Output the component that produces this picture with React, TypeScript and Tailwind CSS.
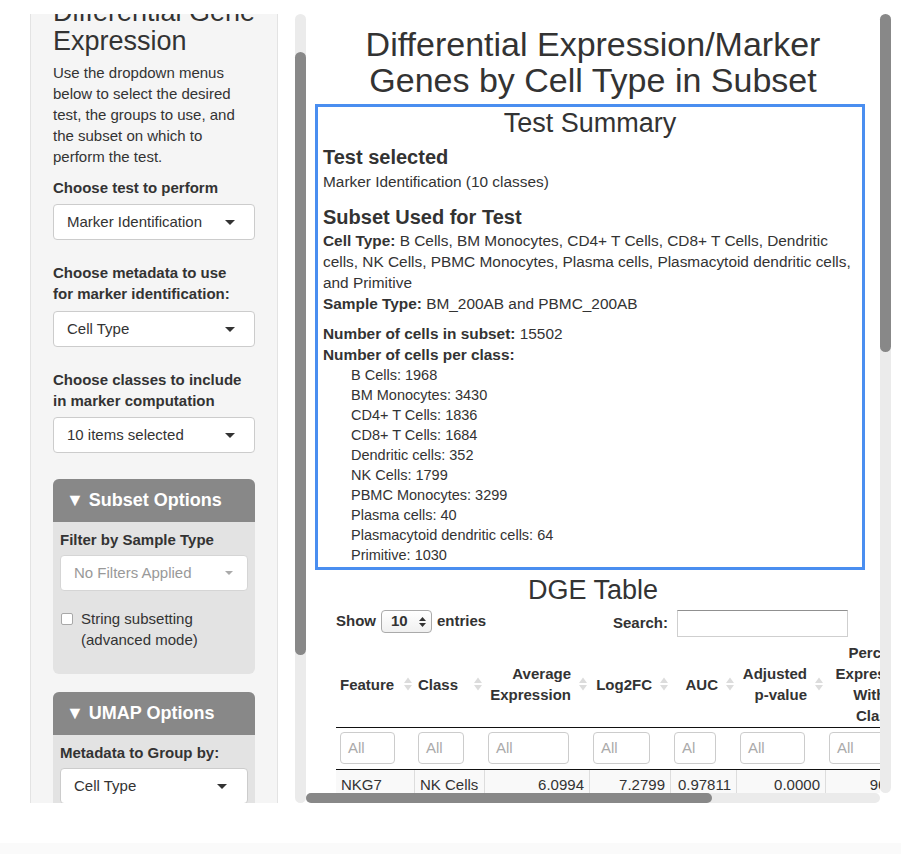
import React from "react";

type Col = {
  w: string;
  inputW: string;
  label: string[];
  right?: boolean;
  center?: boolean;
  value: string;
  ph?: string;
  valuePr?: string;
};

const cols: Col[] = [
  { w: "w-[78px]", inputW: "w-[55px]", label: ["Feature"], value: "NKG7" },
  { w: "w-[70px]", inputW: "w-[46px]", label: ["Class"], value: "NK Cells" },
  { w: "w-[105px]", inputW: "w-[81px]", label: ["Average", "Expression"], right: true, value: "6.0994" },
  { w: "w-[81px]", inputW: "w-[57px]", label: ["Log2FC"], right: true, value: "7.2799" },
  { w: "w-[66px]", inputW: "w-[42px]", label: ["AUC"], right: true, value: "0.97811", ph: "Al" },
  { w: "w-[89px]", inputW: "w-[65px]", label: ["Adjusted", "p-value"], right: true, value: "0.0000" },
  {
    w: "w-[116px]",
    inputW: "w-[80px]",
    label: ["Percent", "Expressing", "Within", "Class"],
    right: true,
    center: true,
    value: "96.5102",
    valuePr: "pr-[17px]",
  },
];

const classCounts = [
  "B Cells: 1968",
  "BM Monocytes: 3430",
  "CD4+ T Cells: 1836",
  "CD8+ T Cells: 1684",
  "Dendritic cells: 352",
  "NK Cells: 1799",
  "PBMC Monocytes: 3299",
  "Plasma cells: 40",
  "Plasmacytoid dendritic cells: 64",
  "Primitive: 1030",
];

function Caret({ light }: { light?: boolean }) {
  return light ? (
    <svg width="8" height="4" viewBox="0 0 8 4" className="shrink-0">
      <path d="M0 0h8L4 4z" fill="#aaa" />
    </svg>
  ) : (
    <svg width="10" height="5" viewBox="0 0 10 5" className="shrink-0">
      <path d="M0 0h10L5 5z" fill="#333" />
    </svg>
  );
}

function Select({ value, disabled }: { value: string; disabled?: boolean }) {
  return (
    <div
      className={
        disabled
          ? "flex h-[36px] items-center justify-between rounded-[4px] border border-[#d5d5d5] bg-white pl-[13px] pr-[14px] text-[15px] text-[#999]"
          : "flex h-[36px] items-center justify-between rounded-[4px] border border-[#ccc] bg-white pl-[13px] pr-[19px] text-[15px] text-[#333]"
      }
    >
      <span>{value}</span>
      <Caret light={disabled} />
    </div>
  );
}

function Panel({ title, children }: { title: string; children: React.ReactNode }) {
  return (
    <div className="rounded-[6px] bg-[#e3e3e3]">
      <div className="flex h-[43px] items-center rounded-t-[6px] bg-[#888] pl-[13px] text-[18px] font-bold text-white">
        ▼ {title}
      </div>
      <div className="px-[7px] pt-[7px] pb-[24px]">{children}</div>
    </div>
  );
}

function SortIcon() {
  return (
    <svg width="8" height="15" viewBox="0 0 8 15" className="absolute right-[2px] top-1/2 -translate-y-1/2">
      <path d="M0 6.5L4 1l4 5.5z" fill="#dcdcdc" />
      <path d="M0 8.5L4 14l4-5.5z" fill="#dcdcdc" />
    </svg>
  );
}

function Sidebar() {
  return (
    <aside className="ml-[30px] h-full w-[248px] shrink-0 overflow-hidden border-x border-[#e3e3e3] bg-[#f5f5f5]">
      <div className="-mt-[16px] px-[22px]">
        <h2 className="whitespace-nowrap text-[27px] leading-[29px] font-normal">
          Differential Gene
          <br />
          Expression
        </h2>
        <p className="mt-[6px] whitespace-nowrap text-[15px] leading-[21px]">
          Use the dropdown menus
          <br />
          below to select the desired
          <br />
          test, the groups to use, and
          <br />
          the subset on which to
          <br />
          perform the test.
        </p>

        <div className="mt-[10px] text-[15px] leading-[21px] font-bold">Choose test to perform</div>
        <div className="mt-[6px]">
          <Select value="Marker Identification" />
        </div>

        <div className="mt-[22px] whitespace-nowrap text-[15px] leading-[21px] font-bold">
          Choose metadata to use
          <br />
          for marker identification:
        </div>
        <div className="mt-[7px]">
          <Select value="Cell Type" />
        </div>

        <div className="mt-[22px] whitespace-nowrap text-[15px] leading-[21px] font-bold">
          Choose classes to include
          <br />
          in marker computation
        </div>
        <div className="mt-[6px]">
          <Select value="10 items selected" />
        </div>

        <div className="mt-[26px]">
          <Panel title="Subset Options">
            <div className="text-[15px] leading-[21px] font-bold">Filter by Sample Type</div>
            <div className="mt-[5px]">
              <Select value="No Filters Applied" disabled />
            </div>
            <div className="mt-[17px] flex gap-[8px] pl-[1px]">
              <div className="mt-[5px] h-[12px] w-[12px] shrink-0 rounded-[2px] border border-[#a8a8a8] bg-white" />
              <div className="text-[15px] leading-[21px]">
                String subsetting
                <br />
                (advanced mode)
              </div>
            </div>
          </Panel>
        </div>

        <div className="mt-[18px]">
          <Panel title="UMAP Options">
            <div className="text-[15px] leading-[21px] font-bold">Metadata to Group by:</div>
            <div className="mt-[5px]">
              <div className="flex h-[36px] items-center justify-between rounded-[4px] border border-[#ccc] bg-white pl-[13px] pr-[20px] text-[15px]">
                <span>Cell Type</span>
                <Caret />
              </div>
            </div>
          </Panel>
        </div>
      </div>
    </aside>
  );
}

function TestSummary() {
  return (
    <div className="ml-[9px] mt-[6px] w-[550px] border-[3px] border-[#4a8ef0] px-[5px] pt-[2px] pb-[2px]">
      <h3 className="text-center text-[27px] leading-[29px] font-normal">Test Summary</h3>
      <h4 className="mt-[8px] text-[20px] leading-[22px] font-bold">Test selected</h4>
      <p className="mt-[3px] text-[15.4px] leading-[21px]">Marker Identification (10 classes)</p>
      <h4 className="mt-[14px] text-[20px] leading-[22px] font-bold">Subset Used for Test</h4>
      <p className="mt-[2px] whitespace-nowrap text-[15.4px] leading-[21px]">
        <b>Cell Type:</b> B Cells, BM Monocytes, CD4+ T Cells, CD8+ T Cells, Dendritic
        <br />
        cells, NK Cells, PBMC Monocytes, Plasma cells, Plasmacytoid dendritic cells,
        <br />
        and Primitive
        <br />
        <b>Sample Type:</b> BM_200AB and PBMC_200AB
      </p>
      <p className="mt-[9px] text-[15.4px] leading-[21px]">
        <b>Number of cells in subset:</b> 15502
        <br />
        <b>Number of cells per class:</b>
      </p>
      <ul className="pl-[28px] text-[14.5px] leading-[20px]">
        {classCounts.map((c) => (
          <li key={c}>{c}</li>
        ))}
      </ul>
    </div>
  );
}

function DgeTable() {
  return (
    <div>
      <h3 className="mt-[6px] text-center text-[27px] leading-[29px] font-normal">DGE Table</h3>
      <div className="mt-[5px] pl-[30px]">
        <div className="flex w-[512px] items-start justify-between text-[15px] font-bold">
          <div className="flex h-[23px] items-center gap-[5px]">
            <span>Show</span>
            <div className="flex h-[23px] w-[51px] items-center justify-between rounded-[4px] border border-[#aaa] bg-gradient-to-b from-white to-[#f0f0f0] pl-[9px] pr-[5px]">
              <span>10</span>
              <svg width="7" height="12" viewBox="0 0 7 12">
                <path d="M0 5L3.5 1L7 5z" fill="#333" />
                <path d="M0 7L3.5 11L7 7z" fill="#333" />
              </svg>
            </div>
            <span>entries</span>
          </div>
          <div className="flex items-center gap-[9px]">
            <span>Search:</span>
            <div className="h-[27px] w-[171px] border border-[#cfcfcf] border-t-[#909090] bg-white" />
          </div>
        </div>

        <div className="mt-[4px] w-[615px] text-[15px]">
          <div className="flex h-[87px] border-b border-[#111]">
            {cols.map((c) => (
              <div key={c.label.join()} className={`relative flex h-full shrink-0 items-center ${c.w}`}>
                <div
                  className={
                    c.center
                      ? "w-full pl-[4px] pr-[18px] text-center leading-[21px] font-bold"
                      : c.right
                        ? "w-full pl-[4px] pr-[18px] text-right leading-[21px] font-bold"
                        : "w-full pl-[4px] pr-[18px] text-left leading-[21px] font-bold"
                  }
                >
                  {c.label.map((l) => (
                    <div key={l}>{l}</div>
                  ))}
                </div>
                <SortIcon />
              </div>
            ))}
          </div>
          <div className="flex h-[42px] border-b border-[#111] pt-[4px]">
            {cols.map((c) => (
              <div key={c.label.join()} className={`shrink-0 pl-[4px] ${c.w}`}>
                <div
                  className={`flex h-[32px] items-center rounded-[4px] border border-[#ccc] bg-white pl-[7px] text-[#aaa] ${c.inputW}`}
                >
                  {c.ph ?? "All"}
                </div>
              </div>
            ))}
          </div>
          <div className="flex h-[30px] bg-[#f9f9f9]">
            {cols.map((c, i) => (
              <div
                key={c.label.join()}
                className={`flex shrink-0 items-center ${c.w} ${i > 0 ? "border-l border-[#ddd]" : ""} ${
                  c.right ? `justify-end ${c.valuePr ?? "pr-[5px]"}` : "pl-[5px]"
                }`}
              >
                {c.value}
              </div>
            ))}
          </div>
        </div>
      </div>
    </div>
  );
}

export default function App() {
  return (
    <div className="h-[854px] w-[901px] overflow-hidden bg-white font-['Liberation_Sans',Arial,sans-serif] text-[#333]">
      <div className="mt-[14px] flex h-[789px]">
        <Sidebar />
        <div className="ml-[17px] h-full w-[11px] shrink-0 rounded-full bg-[#ebebeb] pt-[38px]">
          <div className="h-[603px] rounded-full bg-[#888]" />
        </div>
        <main className="flex h-full w-[585px] shrink-0 flex-col">
          <div className="flex min-h-0 flex-1">
            <div className="w-[574px] shrink-0 overflow-hidden">
              <h1 className="pt-[12px] text-center text-[34px] leading-[36px] font-normal">
                Differential Expression/Marker
                <br />
                Genes by Cell Type in Subset
              </h1>
              <TestSummary />
              <DgeTable />
            </div>
            <div className="h-full w-[11px] shrink-0 rounded-full bg-[#ebebeb]">
              <div className="h-[338px] rounded-full bg-[#888]" />
            </div>
          </div>
          <div className="h-[10px] w-[574px] rounded-full bg-[#ebebeb]">
            <div className="h-full w-[406px] rounded-full bg-[#888]" />
          </div>
        </main>
      </div>
      <div className="mt-[40px] h-[11px] bg-[#fafafa]" />
    </div>
  );
}
